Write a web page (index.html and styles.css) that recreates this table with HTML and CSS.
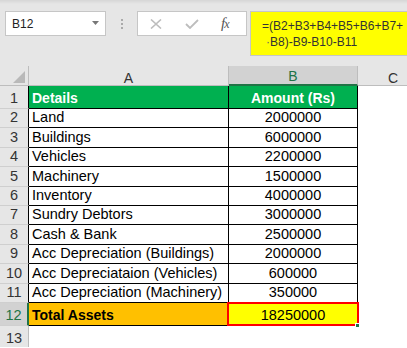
FILE: index.html
```html
<!DOCTYPE html>
<html>
<head>
<meta charset="utf-8">
<link rel="stylesheet" href="styles.css">
</head>
<body>
<div class="app">
  <div class="toolbar">
    <div class="namebox">
      <span class="name">B12</span>
      <svg class="dd" width="7" height="4" viewBox="0 0 7 4"><path d="M0 0H7L3.5 4Z" fill="#777"/></svg>
    </div>
    <div class="dots"><i></i><i></i><i></i></div>
    <div class="fbtns">
      <svg class="ico-x" width="12" height="10" viewBox="0 0 12 10"><path d="M1 0.5L11 9.5M11 0.5L1 9.5" stroke="#bdbdbd" stroke-width="1.6"/></svg>
      <svg class="ico-ok" width="14" height="10" viewBox="0 0 14 10"><path d="M1 5L5 9L13 1" stroke="#bdbdbd" stroke-width="1.8" fill="none"/></svg>
      <span class="fx">f<span class="fxx">x</span></span>
    </div>
    <div class="formula">
      <div>=(B2+B3+B4+B5+B6+B7+</div>
      <div class="l2"><span class="dot">·</span>B8)-B9-B10-B11</div>
    </div>
  </div>
  <div class="sheet">
    <div class="ch corner"><svg width="12" height="12" viewBox="0 0 12 12"><path d="M12 0V12H0Z" fill="#b9b9b9"/></svg></div>
    <div class="ch">A</div>
    <div class="ch sel">B</div>
    <div class="ch cc">C</div>

    <div class="rh r1">1</div><div class="c a hd r1">Details</div><div class="c b hd r1">Amount (Rs)</div><div class="e r1"></div>
    <div class="rh">2</div><div class="c a">Land</div><div class="c b">2000000</div><div class="e"></div>
    <div class="rh">3</div><div class="c a">Buildings</div><div class="c b">6000000</div><div class="e"></div>
    <div class="rh">4</div><div class="c a">Vehicles</div><div class="c b">2200000</div><div class="e"></div>
    <div class="rh">5</div><div class="c a">Machinery</div><div class="c b">1500000</div><div class="e"></div>
    <div class="rh">6</div><div class="c a">Inventory</div><div class="c b">4000000</div><div class="e"></div>
    <div class="rh">7</div><div class="c a">Sundry Debtors</div><div class="c b">3000000</div><div class="e"></div>
    <div class="rh">8</div><div class="c a">Cash &amp; Bank</div><div class="c b">2500000</div><div class="e"></div>
    <div class="rh">9</div><div class="c a">Acc Depreciation (Buildings)</div><div class="c b">2000000</div><div class="e"></div>
    <div class="rh">10</div><div class="c a">Acc Depreciataion (Vehicles)</div><div class="c b">600000</div><div class="e"></div>
    <div class="rh">11</div><div class="c a">Acc Depreciation (Machinery)</div><div class="c b">350000</div><div class="e"></div>
    <div class="rh rsel">12</div><div class="c a tot">Total Assets</div><div class="c b active">18250000<span class="handle"></span></div><div class="e"></div>
    <div class="rh last">13</div><div class="e"></div><div class="e"></div><div class="e"></div>
  </div>
</div>
</body>
</html>
```

FILE: styles.css
```css
* { box-sizing: border-box; }
html, body { margin: 0; padding: 0; background: #fff; overflow: hidden; }
body { width: 407px; height: 348px; font-family: "Liberation Sans", Arial, sans-serif; }
.app { width: 407px; }

.toolbar {
  height: 66px;
  background: linear-gradient(#d6d6d6, #e6e6e6 4px, #e6e6e6);
  display: flex;
  align-items: flex-start;
  padding: 11px 0 0 5px;
}
.namebox {
  width: 101px; height: 25px;
  background: #fff;
  border: 1px solid #c6c6c6;
  display: flex; align-items: center; justify-content: space-between;
  padding: 0 6px 0 6px;
}
.name { font-size: 12px; color: #222; padding-top: 1px; }
.dd { margin-top: -2px; }
.dots {
  width: 31px; height: 25px;
  display: flex; flex-direction: column; align-items: center; justify-content: center; gap: 2px;
  padding-top: 1px;
}
.dots i { display: block; width: 2px; height: 2px; background: #aaa; }
.fbtns {
  width: 110px; height: 25px;
  background: #fff;
  border: 1px solid #c6c6c6;
  display: flex; align-items: center;
  padding-left: 12px;
}
.ico-x { margin-top: 1px; }
.ico-ok { margin-left: 23px; margin-top: 1px; }
.fx {
  margin-left: 22px;
  font-family: "Liberation Serif", serif; font-style: italic;
  font-size: 15px; color: #555; letter-spacing: -1px;
}
.fxx { font-size: 12px; }
.formula {
  margin-left: 3px;
  flex: 1; height: 45px;
  background: #ffff00;
  border: 1px solid #c6c6c6; border-right: none;
  font-size: 12px; color: #333;
  padding: 7px 0 0 11px;
  line-height: 15.5px;
  white-space: nowrap;
  overflow: hidden;
}
.formula .l2 { padding-left: 7px; }
.formula .dot { margin-left: -3px; color: #666; }

.sheet {
  display: grid;
  grid-template-columns: 29px 200px 129px 49px;
  grid-template-rows: 20px 23px repeat(10, 19.4px) 23.4px 21px;
  background: #fff;
}
.ch {
  background: #e6e6e6;
  border-right: 1px solid #bdbdbd;
  border-bottom: 1px solid #bdbdbd;
  font-size: 14px; color: #333;
  display: flex; align-items: flex-end; justify-content: center;
  line-height: 14px;
}
.ch.corner { align-items: flex-end; justify-content: flex-end; padding: 0 3px 2px 0; }
.ch.sel { background: #d2d2d2; color: #217346; border-bottom: 2px solid #217346; line-height: 15px; }
.ch.cc { border-right: none; padding-left: 21px; }

.rh {
  background: #e6e6e6;
  border-right: 1px solid #000;
  border-bottom: 1px solid #cfcfcf;
  font-size: 14.5px; color: #333;
  display: flex; align-items: flex-end; justify-content: center;
  line-height: 17px; padding-bottom: 1px;
}
.rh.rsel { background: #d2d2d2; color: #217346; border-right: 2px solid #217346; }
.rh.last { border-right: 1px solid #bdbdbd; border-bottom: none; padding-bottom: 0; }

.c {
  border-right: 1px solid #000;
  border-bottom: 1px solid #000;
  font-size: 14.5px; color: #000;
  display: flex; align-items: flex-end;
  line-height: 17px; padding-bottom: 1px;
  white-space: nowrap;
}
.c.a { padding-left: 3px; }
.c.b { justify-content: center; }
.c.hd { background: #00b050; color: #fff; font-weight: bold; font-size: 14px; }
.c.tot { background: #ffc000; font-weight: bold; font-size: 14px; }
.c.active { background: #ffff00; position: relative; }
.c.active::after {
  content: "";
  position: absolute;
  left: -2px; top: -1px; right: -2px; bottom: -1px;
  border: 2.5px solid #ff0000;
}
.handle {
  position: absolute;
  right: -3px; bottom: -3px;
  width: 5px; height: 5px;
  background: #217346;
  border: 1px solid #fff;
  z-index: 2;
}
.e { background: #fff; }
```
